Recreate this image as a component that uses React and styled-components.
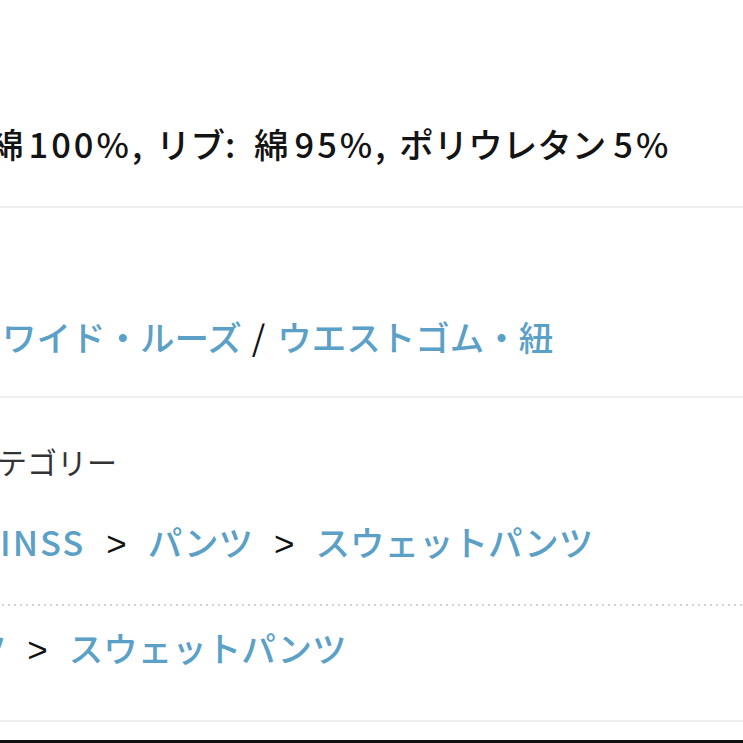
import React from "react";
import styled, { createGlobalStyle } from "styled-components";

const GlobalStyle = createGlobalStyle`
  html, body {
    margin: 0;
    padding: 0;
    background: #ffffff;
    overflow: hidden;
  }
  body {
    font-family: "Noto Sans CJK JP", "Noto Sans", sans-serif;
    color: #111;
  }
`;

const Page = styled.div`
  width: 743px;
  height: 743px;
  display: flex;
  flex-direction: column;
  overflow: hidden;
`;

const Section = styled.section`
  padding: ${(props) => props.pad};
  border-bottom: 2px solid #efefef;
  display: flex;
  flex-direction: column;
`;

const Line = styled.div`
  margin-left: ${(props) => props.offset}px;
  white-space: nowrap;
  font-size: 34.5px;
  line-height: 48px;
  font-weight: 500;
  color: #141414;
`;

const Label = styled.div`
  margin-left: ${(props) => props.offset}px;
  margin-bottom: 36px;
  white-space: nowrap;
  font-size: 30px;
  line-height: 40px;
  font-weight: 400;
  color: #333;
`;

// latin runs are set wider than the CJK font gives them
const Latin = styled.span`
  letter-spacing: ${(props) => props.spacing || 3}px;
  margin-left: ${(props) => props.lead || 0}px;
  margin-right: ${(props) => props.trail || 0}px;
`;

const Link = styled.span`
  color: #5ba0c7;
  font-weight: 500;
`;

const Slash = styled.span`
  color: #111;
  font-weight: 400;
  margin: 0 12px 0 10px;
`;

const Arrow = styled.span`
  display: inline-block;
  line-height: 1;
  color: #111;
  font-family: "Liberation Sans", Arial, sans-serif;
  font-weight: 400;
  font-size: 35px;
  margin: 0 21px;
`;

const Dotted = styled.div`
  height: 2px;
  margin: ${(props) => props.gap};
  background-image: radial-gradient(circle, #d2d2d2 1px, transparent 1.2px);
  background-size: 6px 2px;
  background-repeat: repeat-x;
`;

const BottomBar = styled.div`
  margin-top: auto;
  height: 3px;
  background: #111;
`;

const Breadcrumb = ({ items, offset }) => (
  <Line offset={offset}>
    {items.map((item, i) => (
      <React.Fragment key={item}>
        {i > 0 && <Arrow>&gt;</Arrow>}
        <Link>{/^[A-Z]+$/.test(item) ? <Latin spacing={2}>{item}</Latin> : item}</Link>
      </React.Fragment>
    ))}
  </Line>
);

export default function App() {
  return (
    <Page>
      <GlobalStyle />
      <Section pad="119px 0 39px">
        <Line offset={-11}>
          綿<Latin lead={5}>100%, </Latin>リブ<Latin spacing={1} trail={9}>: </Latin>
          綿<Latin lead={6}>95%, </Latin>ポリウレタン<Latin lead={7}>5%</Latin>
        </Line>
      </Section>
      <Section pad="104px 0 36px">
        <Line offset={2}>
          <Link>ワイド・ルーズ</Link>
          <Slash>/</Slash>
          <Link>ウエストゴム・紐</Link>
        </Line>
      </Section>
      <Section pad="43px 0 49px">
        <Label offset={-33}>カテゴリー</Label>
        <Breadcrumb offset={0} items={["INSS", "パンツ", "スウェットパンツ"]} />
        <Dotted gap="39px 0 17px" />
        <Breadcrumb offset={-99} items={["パンツ", "スウェットパンツ"]} />
      </Section>
      <BottomBar />
    </Page>
  );
}
